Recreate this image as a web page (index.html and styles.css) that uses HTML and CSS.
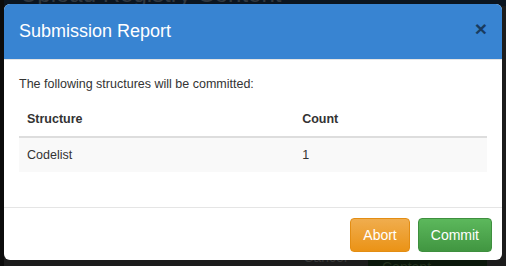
FILE: index.html
```html
<!DOCTYPE html>
<html lang="en">
<head>
  <meta charset="UTF-8" />
  <title>Submission Report</title>
  <link rel="stylesheet" href="styles.css">
</head>
<body>
  <!-- page behind the dialog, dimmed by the backdrop -->
  <div class="page">
    <h2 class="page-title">Upload Registry Content</h2>
    <div class="page-actions">
      <span class="page-cancel">Cancel</span>
      <span class="page-import">Import Content</span>
    </div>
  </div>

  <div class="modal">
    <div class="modal-header">
      <h4 class="modal-title">Submission Report</h4>
      <span class="close">&times;</span>
    </div>
    <div class="modal-body">
      <p>The following structures will be committed:</p>
      <table class="report">
        <thead>
          <tr>
            <th class="col-structure">Structure</th>
            <th>Count</th>
          </tr>
        </thead>
        <tbody>
          <tr>
            <td>Codelist</td>
            <td>1</td>
          </tr>
        </tbody>
      </table>
    </div>
    <div class="modal-footer">
      <button class="btn btn-warning">Abort</button>
      <button class="btn btn-success">Commit</button>
    </div>
  </div>
</body>
</html>
```

FILE: styles.css
```css
html, body {
  margin: 0;
  padding: 0;
  width: 506px;
  height: 266px;
  overflow: hidden;
  background: #0c0c0c;
  font-family: 'Liberation Sans', Arial, sans-serif;
}

body {
  position: relative;
}

.page {
  display: flex;
  flex-direction: column;
  justify-content: space-between;
  height: 100%;
  margin-left: 4px;
  background: #1c1c1c;
  overflow: hidden;
}

.page-title {
  margin: -19px 0 0 0;
  padding-left: 16px;
  font-size: 24px;
  line-height: 25px;
  font-weight: 400;
  color: #303840;
  background: #0b1520;
}

.page-actions {
  display: flex;
  justify-content: flex-end;
  align-items: center;
  gap: 21px;
  padding-right: 19px;
  margin-bottom: -18px;
}

.page-cancel {
  color: #383838;
  font-size: 14px;
}

.page-import {
  display: inline-block;
  padding: 7px 14px;
  width: 91px;
  font-size: 14px;
  line-height: 20px;
  color: #22301d;
  background: #0b170b;
}

.modal {
  position: absolute;
  top: 4px;
  left: 4px;
  width: 498px;
  background: #fff;
  border-radius: 6px;
  overflow: hidden;
}

.modal-header {
  display: flex;
  justify-content: space-between;
  align-items: center;
  padding: 15px;
  background: #3884d2;
  border-bottom: 1px solid #e5e5e5;
}

.modal-title {
  margin: 0;
  font-size: 18px;
  line-height: 25px;
  font-weight: 400;
  color: #fff;
}

.close {
  font-size: 21px;
  font-weight: 700;
  line-height: 1;
  color: #000;
  opacity: 0.55;
  margin-right: 0;
  margin-top: -6px;
}

.modal-body {
  padding: 15px;
  font-size: 12.5px;
  line-height: 18px;
  color: #333;
}

.modal-body p {
  margin: 0 0 9px 0;
}

.report {
  width: 100%;
  border-collapse: collapse;
  margin-bottom: 20px;
}

.report th,
.report td {
  padding: 8px;
  text-align: left;
  line-height: 18px;
}

.report th {
  font-weight: 700;
  border-bottom: 2px solid #ddd;
}

.report .col-structure {
  width: 58.8%;
}

.report tbody td {
  background: #f9f9f9;
}

.modal-footer {
  display: flex;
  justify-content: flex-end;
  gap: 8px;
  padding: 10px 10px 8px 10px;
  border-top: 1px solid #e5e5e5;
}

.btn {
  padding: 6px 12px;
  font-family: inherit;
  font-size: 14px;
  line-height: 20px;
  color: #fff;
  border: 1px solid transparent;
  border-radius: 4px;
  cursor: pointer;
}

.btn-warning {
  background: linear-gradient(to bottom, #f0ad4e 0%, #eb9316 100%);
  border-color: #e38d13;
}

.btn-success {
  background: linear-gradient(to bottom, #5cb85c 0%, #419641 100%);
  border-color: #3e8f3e;
}
```
